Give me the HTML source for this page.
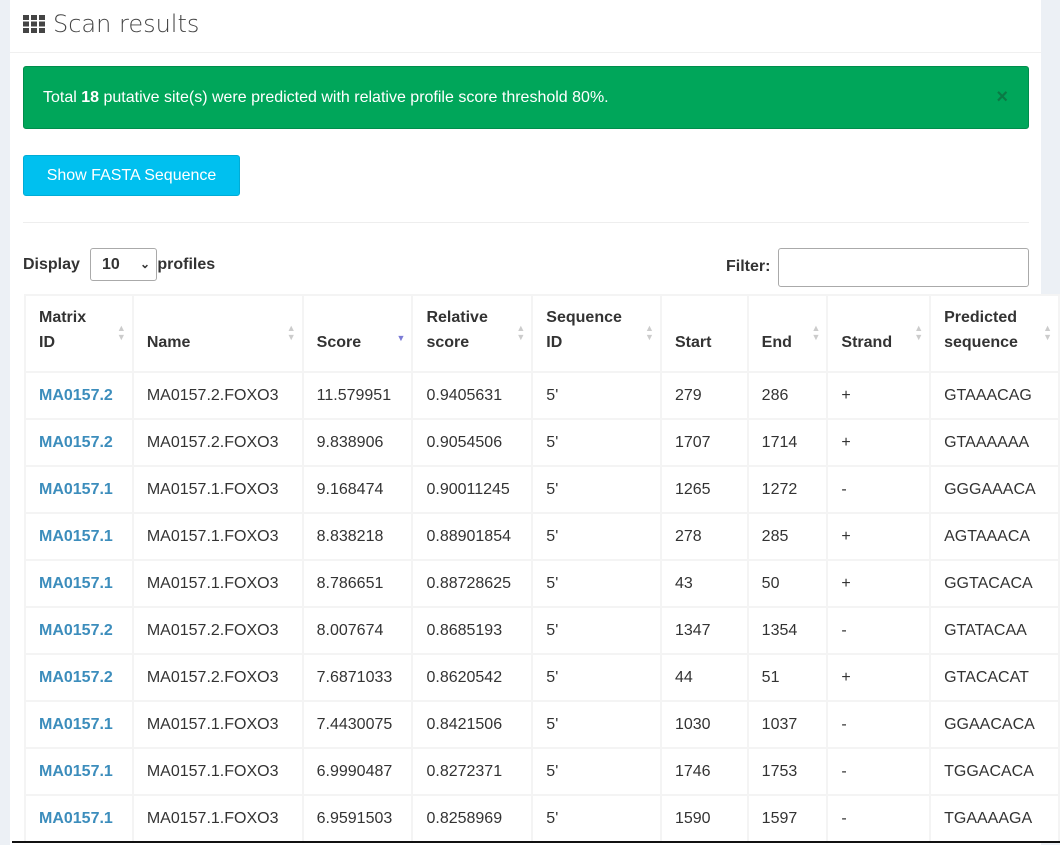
<!DOCTYPE html>
<html><head><meta charset="utf-8"><style>
body{margin:0;width:1060px;height:845px;overflow:hidden;background:#ecf0f5;font-family:"Liberation Sans",Arial,sans-serif;color:#333;position:relative}
.card{position:absolute;left:10px;top:0;width:1031px;height:845px;background:#fff}
.title{position:absolute;left:23px;top:10px;font-size:24px;color:#444;display:flex;align-items:center;font-family:"DejaVu Sans","Liberation Sans",sans-serif;font-weight:300}
.hl{position:absolute;left:10px;top:52px;width:1031px;height:1px;background:#f0f0f0}
.alert{position:absolute;left:23px;top:66px;width:1006px;height:63px;background:#00a65a;border:1px solid #008d4c;box-sizing:border-box;border-radius:3px;color:#fff;font-size:16px;line-height:61px;padding-left:19px}
.alert .x{position:absolute;right:20px;top:0;color:#0a7a45;font-weight:bold;font-size:20px}
.btn{position:absolute;left:23px;top:155px;width:217px;height:41px;background:#00c0ef;border:1px solid #00acd6;box-sizing:border-box;border-radius:3px;color:#fff;font-size:16px;line-height:39px;text-align:center}
.hr2{position:absolute;left:23px;top:222px;width:1006px;height:1px;background:#eee}
.disp{position:absolute;left:23px;top:256px;font-size:16px;font-weight:bold}
.sel{position:absolute;left:90px;top:248px;width:67px;height:33px;border:1px solid #aaa;box-sizing:border-box;border-radius:3px;font-size:16px;font-weight:bold;line-height:31px;padding-left:11px}
.filt{position:absolute;left:726px;top:258px;font-size:16px;font-weight:bold}
.inp{position:absolute;left:778px;top:248px;width:251px;height:39px;border:1px solid #aaa;box-sizing:border-box;border-radius:3px}
table{position:absolute;left:24px;top:294px;border-collapse:collapse;font-size:16px;background:#fff}
td,th{border:2px solid #f4f4f4;padding:0 0 0 13px;text-align:left;box-sizing:border-box}
th{height:77px;vertical-align:bottom;padding-bottom:16px;line-height:25px;font-weight:bold;position:relative}
td{height:47px}
td:first-child{font-weight:bold;color:#3c8dbc}
th .s{position:absolute;right:6px;top:28px;color:#ccc;font-size:9px;line-height:9px}
.bot{position:absolute;left:12px;top:841px;width:1048px;height:2px;background:#111}
</style></head><body>
<div class="card"></div>
<div class="title"><svg width="22" height="18" viewBox="0 0 22 18" style="margin-right:8px"><g fill="#444"><rect x="0" y="0" width="6" height="5"/><rect x="8" y="0" width="6" height="5"/><rect x="16" y="0" width="6" height="5"/><rect x="0" y="6.5" width="6" height="5"/><rect x="8" y="6.5" width="6" height="5"/><rect x="16" y="6.5" width="6" height="5"/><rect x="0" y="13" width="6" height="5"/><rect x="8" y="13" width="6" height="5"/><rect x="16" y="13" width="6" height="5"/></g></svg>Scan results</div>
<div class="hl"></div>
<div class="alert">Total <b>18</b> putative site(s) were predicted with relative profile score threshold 80%.<span class="x">×</span></div>
<div class="btn">Show FASTA Sequence</div>
<div class="hr2"></div>
<div class="disp">Display <span style="display:inline-block;width:73px"></span>profiles</div>
<div class="sel">10 <span style="position:absolute;right:6px;font-size:12px">&#8964;</span></div>
<div class="filt">Filter:</div>
<div class="inp"></div>
<table>
<tr><th style="width:108px">Matrix<br>ID<span class="s">▲<br>▼</span></th><th style="width:170px">Name<span class="s">▲<br>▼</span></th><th style="width:110px">Score<span class="s" style="color:#7b7bd6;top:38px">▼</span></th><th style="width:120px">Relative<br>score<span class="s">▲<br>▼</span></th><th style="width:129px">Sequence<br>ID<span class="s">▲<br>▼</span></th><th style="width:87px">Start</th><th style="width:80px">End<span class="s">▲<br>▼</span></th><th style="width:103px">Strand<span class="s">▲<br>▼</span></th><th style="width:129px">Predicted<br>sequence<span class="s">▲<br>▼</span></th></tr>
<tr><td>MA0157.2</td><td>MA0157.2.FOXO3</td><td>11.579951</td><td>0.9405631</td><td>5'</td><td>279</td><td>286</td><td>+</td><td>GTAAACAG</td></tr>
<tr><td>MA0157.2</td><td>MA0157.2.FOXO3</td><td>9.838906</td><td>0.9054506</td><td>5'</td><td>1707</td><td>1714</td><td>+</td><td>GTAAAAAA</td></tr>
<tr><td>MA0157.1</td><td>MA0157.1.FOXO3</td><td>9.168474</td><td>0.90011245</td><td>5'</td><td>1265</td><td>1272</td><td>-</td><td>GGGAAACA</td></tr>
<tr><td>MA0157.1</td><td>MA0157.1.FOXO3</td><td>8.838218</td><td>0.88901854</td><td>5'</td><td>278</td><td>285</td><td>+</td><td>AGTAAACA</td></tr>
<tr><td>MA0157.1</td><td>MA0157.1.FOXO3</td><td>8.786651</td><td>0.88728625</td><td>5'</td><td>43</td><td>50</td><td>+</td><td>GGTACACA</td></tr>
<tr><td>MA0157.2</td><td>MA0157.2.FOXO3</td><td>8.007674</td><td>0.8685193</td><td>5'</td><td>1347</td><td>1354</td><td>-</td><td>GTATACAA</td></tr>
<tr><td>MA0157.2</td><td>MA0157.2.FOXO3</td><td>7.6871033</td><td>0.8620542</td><td>5'</td><td>44</td><td>51</td><td>+</td><td>GTACACAT</td></tr>
<tr><td>MA0157.1</td><td>MA0157.1.FOXO3</td><td>7.4430075</td><td>0.8421506</td><td>5'</td><td>1030</td><td>1037</td><td>-</td><td>GGAACACA</td></tr>
<tr><td>MA0157.1</td><td>MA0157.1.FOXO3</td><td>6.9990487</td><td>0.8272371</td><td>5'</td><td>1746</td><td>1753</td><td>-</td><td>TGGACACA</td></tr>
<tr><td>MA0157.1</td><td>MA0157.1.FOXO3</td><td>6.9591503</td><td>0.8258969</td><td>5'</td><td>1590</td><td>1597</td><td>-</td><td>TGAAAAGA</td></tr>
</table>
<div class="bot"></div>
</body></html>
